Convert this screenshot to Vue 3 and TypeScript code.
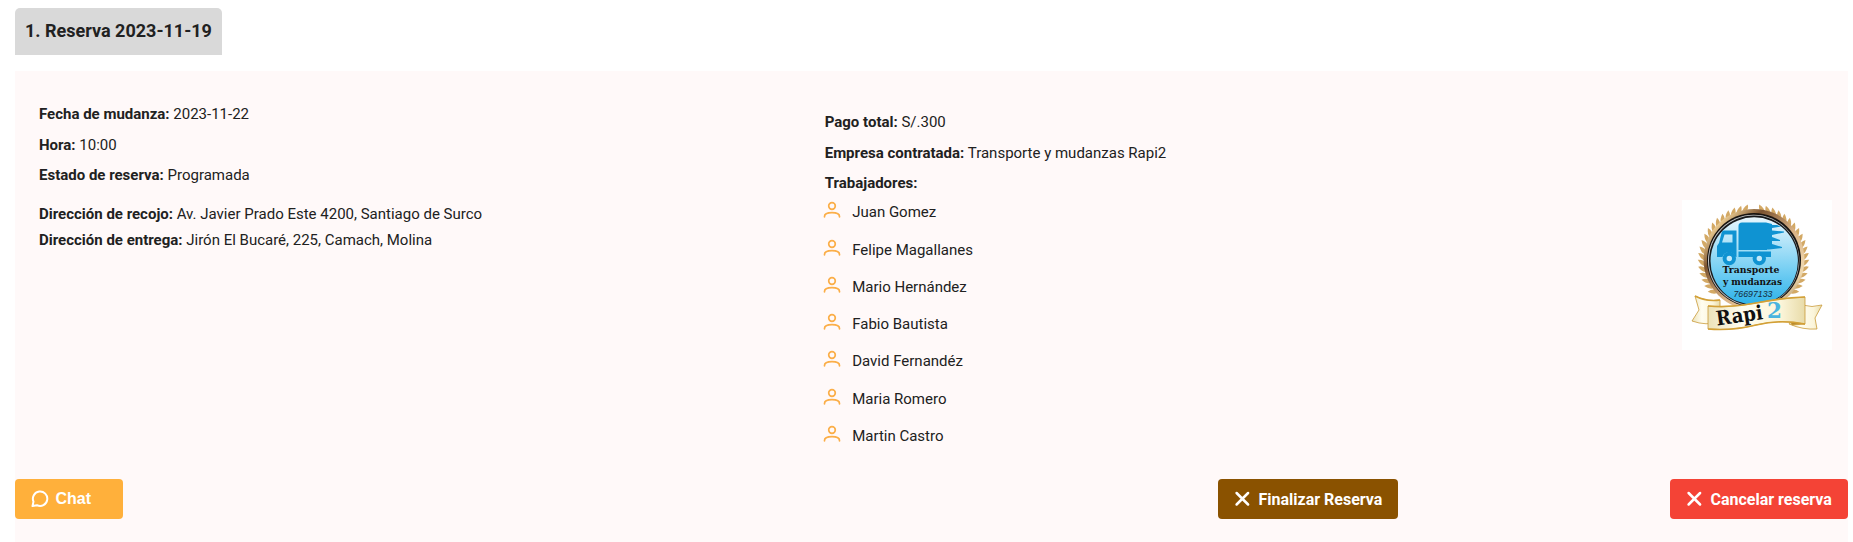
<script setup lang="ts">
interface Detail {
  label: string
  value: string
}

const schedule: Detail[] = [
  { label: 'Fecha de mudanza:', value: '2023-11-22' },
  { label: 'Hora:', value: '10:00' },
  { label: 'Estado de reserva:', value: 'Programada' },
]

const addresses: Detail[] = [
  { label: 'Dirección de recojo:', value: 'Av. Javier Prado Este 4200, Santiago de Surco' },
  { label: 'Dirección de entrega:', value: 'Jirón El Bucaré, 225, Camach, Molina' },
]

const service: Detail[] = [
  { label: 'Pago total:', value: 'S/.300' },
  { label: 'Empresa contratada:', value: 'Transporte y mudanzas Rapi2' },
  { label: 'Trabajadores:', value: '' },
]

const workers: string[] = [
  'Juan Gomez',
  'Felipe Magallanes',
  'Mario Hernández',
  'Fabio Bautista',
  'David Fernandéz',
  'Maria Romero',
  'Martin Castro',
]

// Laurel leaves: angles in degrees around the badge centre, clockwise from the right.
const leftLeaves: number[] = Array.from({ length: 18 }, (_, i) => 140 + i * 7)
const rightLeaves: number[] = leftLeaves.map((a) => 180 - a)
</script>

<template>
  <main class="page">
    <h2 class="tab">1. Reserva 2023-11-19</h2>
    <section class="panel">
      <div class="info">
        <div class="col left">
          <p v-for="d in schedule" :key="d.label" class="row"><b>{{ d.label }}</b> {{ d.value }}</p>
          <div class="addresses">
            <p v-for="d in addresses" :key="d.label" class="address"><b>{{ d.label }}</b> {{ d.value }}</p>
          </div>
        </div>
        <div class="col middle">
          <p v-for="d in service" :key="d.label" class="row"><b>{{ d.label }}</b> {{ d.value }}</p>
          <ul class="workers">
            <li v-for="w in workers" :key="w">
              <svg class="person" viewBox="0 0 18 18" fill="none" stroke="#fbae48" stroke-width="1.7" stroke-linecap="round">
                <circle cx="9" cy="5" r="3.3" />
                <path d="M1.500 15.800v-.4c0-2.600 2.800-3.800 7.500-3.800s7.500 1.200 7.500 3.800v.4" />
              </svg>
              <span>{{ w }}</span>
            </li>
          </ul>
        </div>
        <svg class="logo" viewBox="0 0 150 150">
          <defs>
            <linearGradient id="gold" x1="0" y1="0" x2="1" y2="1">
              <stop offset="0" stop-color="#8a5a22" />
              <stop offset=".15" stop-color="#e9c98f" />
              <stop offset=".3" stop-color="#7b5330" />
              <stop offset=".55" stop-color="#d9b184" />
              <stop offset=".8" stop-color="#f0d9b0" />
              <stop offset="1" stop-color="#744713" />
            </linearGradient>
            <linearGradient id="sky" x1="0" y1="0" x2="0" y2="1">
              <stop offset="0" stop-color="#e8f6fd" />
              <stop offset=".6" stop-color="#76cff3" />
              <stop offset="1" stop-color="#2cb2ea" />
            </linearGradient>
            <linearGradient id="ribbon" x1="0" y1="0" x2="1" y2="0">
              <stop offset="0" stop-color="#ece2b8" />
              <stop offset=".35" stop-color="#fffdf0" />
              <stop offset=".75" stop-color="#fbf5da" />
              <stop offset="1" stop-color="#e8dba8" />
            </linearGradient>
          </defs>
          <rect width="150" height="150" fill="#fff" />
          <g fill="#d3a965">
            <path
              v-for="a in leftLeaves"
              :key="'l' + a"
              d="M49 -2Q53 -1 55.500 5Q50 5 48 1Z"
              :transform="`translate(71.5 60) rotate(${a})`"
            />
            <path
              v-for="a in rightLeaves"
              :key="'r' + a"
              d="M49 2Q53 1 55.500 -5Q50 -5 48 -1Z"
              :transform="`translate(71.5 60) rotate(${a})`"
            />
          </g>
          <circle cx="72" cy="59.500" r="50.500" fill="url(#gold)" />
          <circle cx="72" cy="60" r="47" fill="#171310" />
          <circle cx="71.700" cy="60.500" r="45.700" fill="#c3c6c7" />
          <circle cx="72" cy="60.500" r="45" fill="#17191b" />
          <circle cx="72.200" cy="61" r="43.700" fill="url(#sky)" />
          <g fill="#0f93d2">
            <path d="M60 22.500h24l6 1.500v1h5l4 1.500-9 1.500v2.500l12 1v1l-12 2.500v2l8 3v1h-8v3l10 3v1l-13 1.500h-2V50H56.500V26q0-3.500 3.500-3.500z" />
            <path fill-rule="evenodd" d="M41.500 30.500h13V57h-1a6.800 6.800 0 0 0-13 0H35V46l2-3 2.500-10q.5-2.500 2-2.500zm1 4-2.500 8h10.500v-8z" />
            <path d="M56.500 51.500h32.500V57h-5.500a6.800 6.800 0 0 0-12.500 0H56.500z" />
          </g>
          <g fill="#c4e9f9" stroke="#0f93d2" stroke-width="4">
            <circle cx="47.300" cy="58.500" r="4.700" />
            <circle cx="77.300" cy="58.500" r="4.700" />
          </g>
          <g class="badge-text" fill="#111">
            <text x="40.500" y="72.500" textLength="57" lengthAdjust="spacingAndGlyphs">Transporte</text>
            <text x="41" y="85.300" textLength="59" lengthAdjust="spacingAndGlyphs">y mudanzas</text>
          </g>
          <text class="phone" x="51.500" y="96.500" textLength="39" lengthAdjust="spacingAndGlyphs">76697133</text>
          <g stroke="#c99a38" stroke-width=".8" fill="url(#ribbon)">
            <path d="M13 96q12 6 25 4v22q-14 4-28-1l7-11z" />
            <path d="M140 105q-10 3-20 0l-13 19q14 6 28 5l-2-11z" />
            <path d="M107 119q8 3 16 5l-13 1z" fill="#b98a2c" />
            <path d="M26 106Q50 108 74 103T123 97V124Q98 119 74 125T26 129Z" />
          </g>
          <path d="M26 129Q50 131 74 125T123 124M13 96q12 6 25 4M26 106Q50 108 74 103T123 97" fill="none" stroke="#d3a036" stroke-width="1.700" />
          <text class="rapi" x="0" y="0" textLength="47" lengthAdjust="spacingAndGlyphs" transform="translate(35 125.500) rotate(-8)">Rapi</text>
          <text class="two" x="85" y="117.500" textLength="15" lengthAdjust="spacingAndGlyphs">2</text>
        </svg>
      </div>
      <div class="actions">
        <button class="btn chat">
          <svg class="icon" viewBox="0 0 18 18" fill="none" stroke="#fff" stroke-width="2" stroke-linejoin="round">
            <path d="M1.500 16l1-4.400A7.200 7.200 0 1 1 6 15.200z" />
          </svg>
          Chat
        </button>
        <button class="btn finish">
          <svg class="icon" viewBox="0 0 18 18" stroke="#fff" stroke-width="2.500" stroke-linecap="round">
            <path d="M2.600 3l11.500 11.500M14.100 3L2.600 14.500" />
          </svg>
          Finalizar Reserva
        </button>
        <button class="btn cancel">
          <svg class="icon" viewBox="0 0 18 18" stroke="#fff" stroke-width="2.500" stroke-linecap="round">
            <path d="M2.600 3l11.500 11.500M14.100 3L2.600 14.500" />
          </svg>
          Cancelar reserva
        </button>
      </div>
    </section>
  </main>
</template>

<style>
body {
  margin: 0;
  background: #fff;
}
</style>

<style scoped>
.page {
  box-sizing: border-box;
  height: 542px;
  padding: 8px 5px 0 15px;
  overflow: hidden;
  font-family: Roboto, "Liberation Sans", sans-serif;
  font-size: 15px;
  color: #212121;
}
.tab {
  box-sizing: border-box;
  width: 207px;
  height: 47px;
  margin: 0 0 16px;
  padding: 0 0 0 10px;
  border-radius: 5px 5px 0 0;
  background: #d9d9d9;
  font-size: 18px;
  font-weight: 700;
  line-height: 46px;
  white-space: nowrap;
}
.panel {
  height: 471px;
  background: #fff9f9;
}
.info {
  display: flex;
  height: 408px;
}
.col {
  box-sizing: border-box;
  white-space: nowrap;
}
.left {
  width: 785.700px;
  padding: 28px 0 0 24px;
}
.middle {
  flex: 1;
  padding: 36px 0 0 24px;
}
p {
  margin: 0;
}
.row {
  height: 30.500px;
  line-height: 30px;
}
.addresses {
  padding-top: 10px;
}
.address {
  height: 26px;
  line-height: 26px;
}
.workers {
  margin: 0.870px 0 0;
  padding: 0;
  list-style: none;
}
.workers li {
  display: flex;
  height: 37.250px;
  line-height: 26px;
}
.person {
  width: 18px;
  height: 18px;
  margin: 2px 11px 0 -1.500px;
}
.logo {
  width: 150px;
  height: 150px;
  margin: 129px 16px 0 0;
}
.badge-text {
  font: 700 10px "DejaVu Serif", serif;
}
.phone {
  font: italic 9px "Liberation Sans", sans-serif;
  fill: #132b3a;
}
.rapi {
  font: 700 20px "DejaVu Serif", serif;
  fill: #111;
}
.two {
  font: 700 22px "DejaVu Serif", serif;
  fill: #49b4df;
}
.actions {
  display: flex;
}
.btn {
  display: flex;
  align-items: center;
  box-sizing: border-box;
  height: 40px;
  padding: 0 0 0 16px;
  border: 0;
  border-radius: 4px;
  color: #fff;
  font: 700 16px Roboto, sans-serif;
  white-space: nowrap;
}
.icon {
  width: 18px;
  height: 18px;
  margin-right: 6.500px;
}
.chat {
  width: 108px;
  background: #ffb03b;
  font-family: "Liberation Sans", sans-serif;
}
.finish {
  width: 180px;
  margin-left: auto;
  background: #8a5200;
}
.cancel {
  width: 178px;
  margin-left: 272px;
  background: #f44336;
}
</style>
